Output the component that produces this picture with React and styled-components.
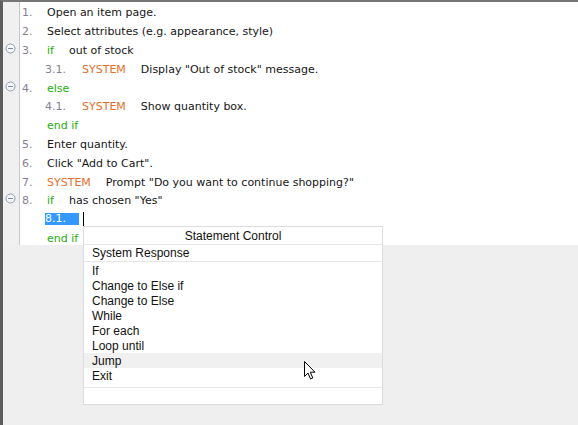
import React from 'react'
import styled, { createGlobalStyle } from 'styled-components'

const GlobalStyle = createGlobalStyle`
  html, body {
    margin: 0;
    padding: 0;
    background: #efefef;
  }
`

const ROW = 18.8

const color = {
  text: '#161616',
  num: '#857f96',
  keyword: '#26ad0c',
  system: '#e46f2c',
  select: '#3399ff',
}

const Frame = styled.div`
  position: relative;
  width: 578px;
  height: 425px;
  box-sizing: border-box;
  overflow: hidden;
  background: #efefef;
  border-top: 2px solid #767676;
  border-left: 3px solid #5d5d5d;
`

const Editor = styled.div`
  display: flex;
  height: 243px;
  font-family: 'DejaVu Sans', Verdana, sans-serif;
  font-size: 11px;
  color: ${color.text};
`

const Gutter = styled.div`
  width: 16px;
  flex: none;
  padding-top: 1.5px;
  background: #f0f0f0;
  border-right: 1px solid #c3cad4;
`

const FoldCell = styled.div`
  height: ${ROW}px;
  display: flex;
  align-items: center;
  padding-left: 2px;

  svg {
    margin-top: -4px;
  }
`

const Lines = styled.div`
  flex: 1;
  padding-top: 1.5px;
  background: #fff;
`

const Row = styled.div`
  height: ${ROW}px;
  display: flex;
  align-items: center;
  padding-left: ${(p) => p.$indent}px;
  white-space: pre;
`

const Num = styled.span`
  display: inline-block;
  width: ${(p) => p.$width}px;
  color: ${color.num};
`

const SelectedNum = styled.span`
  display: inline-block;
  width: 34px;
  height: 12px;
  line-height: 12px;
  margin-top: -2px;
  margin-right: 4px;
  background: ${color.select};
  color: #fff;
`

const Caret = styled.span`
  display: inline-block;
  width: 1px;
  height: 14px;
  margin-top: -1px;
  background: #000;
`

const Keyword = styled.span`
  color: ${(p) => (p.$system ? color.system : color.keyword)};
  margin-right: 15px;
`

const Popup = styled.div`
  position: absolute;
  left: 80px;
  top: 224px;
  width: 300px;
  height: 179px;
  box-sizing: border-box;
  background: #fff;
  border: 1px solid #dcdcdc;
  font-family: 'Liberation Sans', Arial, sans-serif;
  font-size: 12px;
  color: #111;
`

const PopupHeader = styled.div`
  height: 17px;
  line-height: 18px;
  text-align: center;
  border-bottom: 1px solid #e6e6e6;
`

const Section = styled.div`
  border-bottom: 1px solid #e6e6e6;
  padding: ${(p) => p.$pad || '0'};
`

const Item = styled.div`
  height: ${(p) => p.$h || 15}px;
  line-height: ${(p) => (p.$h || 15) + 1}px;
  padding-left: 8px;
  background: ${(p) => (p.$hover ? '#f0f0f0' : 'transparent')};
`

const Pointer = styled.svg`
  position: absolute;
  left: 300px;
  top: 358px;
`

const FoldIcon = () => (
  <svg width="11" height="11" viewBox="0 0 11 11">
    <circle cx="5.5" cy="5.5" r="4.5" fill="#f6f7f9" stroke="#8d9bb0" />
    <line x1="3" y1="5.5" x2="8" y2="5.5" stroke="#7e8ca2" />
  </svg>
)

const lines = [
  { n: '1.', text: 'Open an item page.' },
  { n: '2.', text: 'Select attributes (e.g. appearance, style)' },
  { n: '3.', kw: 'if', text: 'out of stock', fold: true },
  { n: '3.1.', level: 1, sys: true, text: 'Display "Out of stock" message.' },
  { n: '4.', kw: 'else', fold: true },
  { n: '4.1.', level: 1, sys: true, text: 'Show quantity box.' },
  { end: true },
  { n: '5.', text: 'Enter quantity.' },
  { n: '6.', text: 'Click "Add to Cart".' },
  { n: '7.', sys: true, text: 'Prompt "Do you want to continue shopping?"' },
  { n: '8.', kw: 'if', text: 'has chosen "Yes"', fold: true },
  { n: '8.1.', level: 1, selected: true },
  { end: true },
]

const menu = [
  'If',
  'Change to Else if',
  'Change to Else',
  'While',
  'For each',
  'Loop until',
  'Jump',
  'Exit',
]

const Line = ({ data }) => {
  if (data.end) {
    return (
      <Row $indent={27}>
        <Keyword>end if</Keyword>
      </Row>
    )
  }
  const level = data.level || 0
  return (
    <Row $indent={level ? 25 : 2}>
      {data.selected ? (
        <>
          <SelectedNum>{data.n}</SelectedNum>
          <Caret />
        </>
      ) : (
        <Num $width={level ? 37 : 25}>{data.n}</Num>
      )}
      {data.sys && <Keyword $system>SYSTEM</Keyword>}
      {data.kw && <Keyword>{data.kw}</Keyword>}
      {data.text && <span>{data.text}</span>}
    </Row>
  )
}

const App = () => (
  <Frame>
    <GlobalStyle />
    <Editor>
      <Gutter>
        {lines.map((l, i) => (
          <FoldCell key={i}>{l.fold && <FoldIcon />}</FoldCell>
        ))}
      </Gutter>
      <Lines>
        {lines.map((l, i) => (
          <Line key={i} data={l} />
        ))}
      </Lines>
    </Editor>

    <Popup>
      <PopupHeader>Statement Control</PopupHeader>
      <Section>
        <Item $h={16}>System Response</Item>
      </Section>
      <Section $pad="1px 0 4px">
        {menu.map((m) => (
          <Item key={m} $hover={m === 'Jump'}>
            {m}
          </Item>
        ))}
      </Section>
    </Popup>

    <Pointer width="13" height="21" viewBox="0 0 13 21">
      <path
        d="M1.5 1.5 L1.5 16.5 L5 13 L7.5 19 L9.8 18 L7.3 12.2 L12 12.2 Z"
        fill="#fff"
        stroke="#000"
        strokeWidth="1"
        strokeLinejoin="miter"
      />
    </Pointer>
  </Frame>
)

export default App
